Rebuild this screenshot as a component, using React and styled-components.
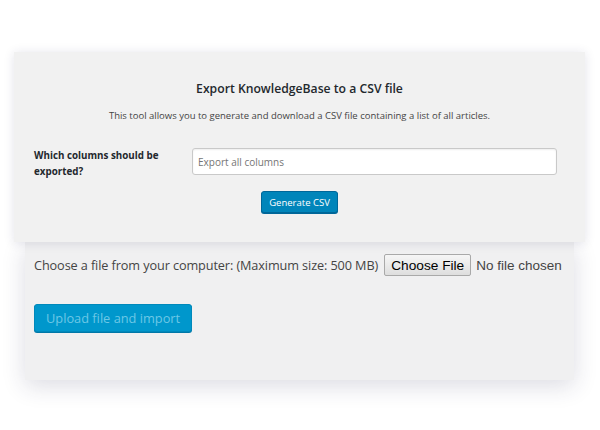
import styled, { createGlobalStyle } from "styled-components"

const GlobalStyle = createGlobalStyle`
  html, body {
    margin: 0;
    padding: 0;
    background: #ffffff;
  }
  body {
    width: 600px;
    height: 430px;
    overflow: hidden;
    font-family: "Open Sans", "Noto Sans", sans-serif;
  }
`;

const Page = styled.div`
  padding-top: 52px;
  display: flex;
  flex-direction: column;
`;

const ExportCard = styled.section`
  position: relative;
  z-index: 2;
  margin: 0 15px 0 14px;
  height: 190px;
  background: #f1f1f1;
  box-shadow: 0 1px 10px rgba(40, 40, 90, 0.13);
  display: flex;
  flex-direction: column;
  align-items: center;
  padding-top: 29px;
  box-sizing: border-box;
`;

const Title = styled.h2`
  margin: 0;
  font-size: 12.2px;
  font-weight: 600;
  color: #23282d;
  line-height: 16px;
`;

const Description = styled.p`
  margin: 12px 0 0;
  font-size: 9.5px;
  color: #444;
  line-height: 14px;
`;

const FormRow = styled.div`
  align-self: stretch;
  display: flex;
  align-items: flex-start;
  padding: 25px 28px 0 20px;
`;

const Label = styled.label`
  width: 158px;
  font-size: 9.8px;
  font-weight: 700;
  color: #23282d;
  line-height: 16px;
`;

const TextInput = styled.input`
  flex: 1;
  height: 27px;
  box-sizing: border-box;
  border: 1px solid #c9c9c9;
  border-radius: 3px;
  background: #fff;
  padding: 0 5px;
  font-family: inherit;
  font-size: 10px;
  color: #32373c;
  box-shadow: inset 0 1px 2px rgba(0, 0, 0, 0.07);
  outline: none;

  &::placeholder {
    color: #757575;
  }
`;

const PrimaryButton = styled.button`
  font-family: inherit;
  background: ${p => (p.$disabled ? "#0097cc" : "#0085ba")};
  color: ${p => (p.$disabled ? "#6cc7e6" : "#ffffff")};
  border: 1px solid ${p => (p.$disabled ? "#0089bb" : "#006799")};
  border-radius: 3px;
  box-shadow: 0 1px 0 ${p => (p.$disabled ? "#0078a8" : "#006799")};
  font-size: ${p => p.$size};
  height: ${p => p.$height};
  padding: 0 ${p => p.$pad};
  cursor: pointer;
`;

const GenerateButton = styled(PrimaryButton)`
  margin-top: 11px;
`;

const ImportCard = styled.section`
  position: relative;
  z-index: 1;
  margin: 0 26px 0 25px;
  height: 138px;
  background: #f0f0f1;
  box-shadow: 0 6px 22px rgba(40, 40, 80, 0.16);
  padding: 12px 9px 0;
  box-sizing: border-box;
  display: flex;
  flex-direction: column;
  align-items: flex-start;
`;

const FileRow = styled.div`
  display: flex;
  align-items: center;
  white-space: nowrap;
`;

const FileLabel = styled.span`
  font-size: 12.7px;
  color: #444;
  letter-spacing: -0.1px;
`;

const FileButton = styled.button`
  margin-left: 6px;
  height: 22px;
  padding: 0 6px;
  font-family: "Liberation Sans", Arial, sans-serif;
  font-size: 13.7px;
  color: #000;
  background: linear-gradient(#f6f6f6, #dedede);
  border: 1px solid #a9a9a9;
  border-radius: 2px;
`;

const NoFile = styled.span`
  margin-left: 5px;
  font-family: "Liberation Sans", Arial, sans-serif;
  font-size: 13.5px;
  color: #444;
`;

const UploadButton = styled(PrimaryButton)`
  margin-top: 28px;
`;

export default function App() {
  return (
    <>
      <GlobalStyle />
      <Page>
        <ExportCard>
          <Title>Export KnowledgeBase to a CSV file</Title>
          <Description>
            This tool allows you to generate and download a CSV file containing a list of all articles.
          </Description>
          <FormRow>
            <Label>Which columns should be exported?</Label>
            <TextInput placeholder="Export all columns" />
          </FormRow>
          <GenerateButton $size="9.5px" $height="22px" $pad="7px">
            Generate CSV
          </GenerateButton>
        </ExportCard>
        <ImportCard>
          <FileRow>
            <FileLabel>Choose a file from your computer: (Maximum size: 500 MB)</FileLabel>
            <FileButton>Choose File</FileButton>
            <NoFile>No file chosen</NoFile>
          </FileRow>
          <UploadButton $disabled $size="12.8px" $height="28px" $pad="11px">
            Upload file and import
          </UploadButton>
        </ImportCard>
      </Page>
    </>
  )
}
